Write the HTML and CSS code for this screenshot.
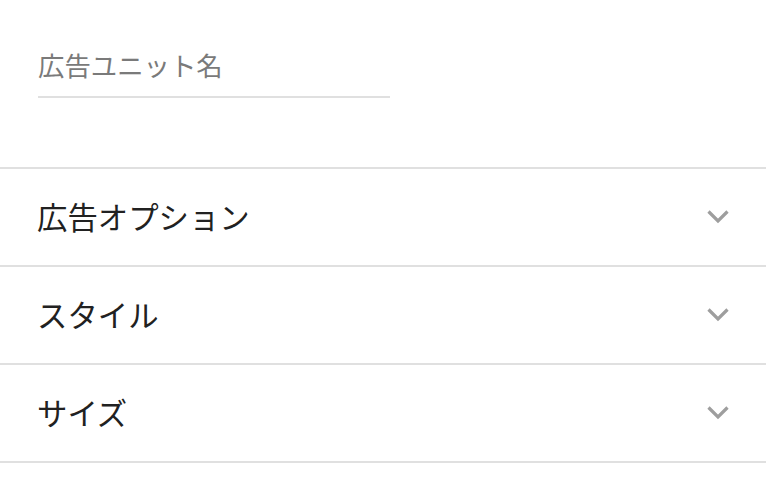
FILE: index.html
```html
<!DOCTYPE html>
<html lang="ja">
<head>
  <meta charset="UTF-8" />
  <meta name="viewport" content="width=device-width, initial-scale=1.0"/>
  <title>広告ユニット</title>
  <link rel="stylesheet" href="styles.css">
</head>
<body>

  <!-- Name field -->
  <div class="name-field">
    <input type="text" class="name-input" placeholder="広告ユニット名" />
  </div>

  <!-- Sections -->
  <div class="section">
    <span class="section-title">広告オプション</span>
    <svg class="chevron" viewBox="0 0 24 16"><path d="M2.5 2.5 L12 12 L21.5 2.5"/></svg>
  </div>
  <div class="section">
    <span class="section-title">スタイル</span>
    <svg class="chevron" viewBox="0 0 24 16"><path d="M2.5 2.5 L12 12 L21.5 2.5"/></svg>
  </div>
  <div class="section last">
    <span class="section-title">サイズ</span>
    <svg class="chevron" viewBox="0 0 24 16"><path d="M2.5 2.5 L12 12 L21.5 2.5"/></svg>
  </div>

</body>
</html>
```

FILE: styles.css
```css
body {
  background-color: white;
  color: #212121;
  font-family: "Noto Sans CJK JP", "Noto Sans", sans-serif;
  margin: 0;
  padding: 0;
}

.name-field {
  box-sizing: border-box;
  height: 167px;
  padding: 47px 0 0 38px;
}

.name-input {
  display: block;
  width: 352px;
  height: 36px;
  padding: 0 0 13px 0;
  margin: 0;
  border: none;
  border-bottom: 2px solid #e0e0e0;
  outline: none;
  background: transparent;
  font-family: inherit;
  font-size: 26.4px;
  line-height: 36px;
  color: #212121;
}

.name-input::placeholder {
  color: #7a7a7a;
}

.section {
  display: flex;
  align-items: center;
  justify-content: space-between;
  box-sizing: border-box;
  height: 98px;
  padding: 0 36px 3px 37px;
  border-top: 2px solid #e0e0e0;
}

.section.last {
  height: 100px;
  border-bottom: 2px solid #e0e0e0;
}

.section-title {
  font-size: 30.4px;
  line-height: 40px;
}

.chevron {
  width: 24px;
  height: 16px;
  margin-top: 3px;
  fill: none;
  stroke: #9e9e9e;
  stroke-width: 3.2;
}
```
